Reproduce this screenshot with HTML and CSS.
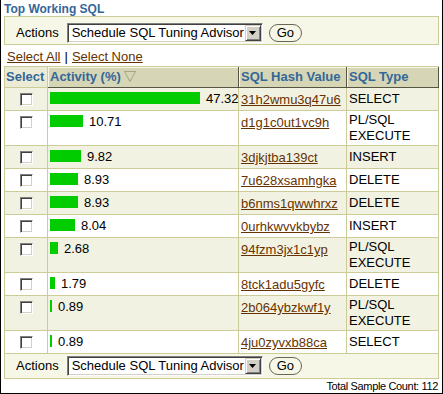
FILE: index.html
```html
<!DOCTYPE html>
<html lang="en">
<head>
    <meta charset="UTF-8">
    <meta name="viewport" content="width=device-width, initial-scale=1.0">
    <title>Top Working SQL</title>
    <link rel="stylesheet" href="styles.css">
</head>
<body>
    <div class="page">
        <h1 class="title">Top Working SQL</h1>

        <div class="actions top">
            <span class="actions-label">Actions</span>
            <span class="select">
                <span class="select-text">Schedule SQL Tuning Advisor</span>
                <span class="select-arrow"><svg width="7" height="4" viewBox="0 0 7 4"><polygon points="0,0 7,0 3.5,4" fill="#000"/></svg></span>
            </span>
            <button class="go-btn">Go</button>
        </div>

        <div class="select-links">
            <a href="#">Select All</a><span class="sep">|</span><a href="#">Select None</a>
        </div>

        <table class="sql-table">
            <thead>
                <tr>
                    <th class="col-select">Select</th>
                    <th class="col-activity sortable">Activity (%)<svg class="sort-icon" width="12" height="11" viewBox="0 0 12 11"><polygon points="0.5,0.5 11.5,0.5 6,10.5" fill="none" stroke="#a3a386"/></svg></th>
                    <th class="col-hash sortable">SQL Hash Value</th>
                    <th class="col-type sortable">SQL Type</th>
                </tr>
            </thead>
            <tbody id="sql-rows">
            </tbody>
        </table>

        <div class="actions bottom">
            <span class="actions-label">Actions</span>
            <span class="select">
                <span class="select-text">Schedule SQL Tuning Advisor</span>
                <span class="select-arrow"><svg width="7" height="4" viewBox="0 0 7 4"><polygon points="0,0 7,0 3.5,4" fill="#000"/></svg></span>
            </span>
            <button class="go-btn">Go</button>
        </div>

        <div class="total">Total Sample Count: 112</div>
    </div>

    <script>
        const rows = [
            { pct: 47.32, hash: '31h2wmu3q47u6', type: 'SELECT' },
            { pct: 10.71, hash: 'd1g1c0ut1vc9h', type: 'PL/SQL EXECUTE' },
            { pct: 9.82, hash: '3djkjtba139ct', type: 'INSERT' },
            { pct: 8.93, hash: '7u628xsamhgka', type: 'DELETE' },
            { pct: 8.93, hash: 'b6nms1qwwhrxz', type: 'DELETE' },
            { pct: 8.04, hash: '0urhkwvvkbybz', type: 'INSERT' },
            { pct: 2.68, hash: '94fzm3jx1c1yp', type: 'PL/SQL EXECUTE' },
            { pct: 1.79, hash: '8tck1adu5gyfc', type: 'DELETE' },
            { pct: 0.89, hash: '2b064ybzkwf1y', type: 'PL/SQL EXECUTE' },
            { pct: 0.89, hash: '4ju0zyvxb88ca', type: 'SELECT' }
        ];

        // widest bar is 150px
        const scale = 150 / 47.32;

        document.getElementById('sql-rows').innerHTML = rows.map(row => `
            <tr>
                <td class="check-cell"><input type="checkbox"></td>
                <td class="activity-cell">
                    <div class="activity">
                        <span class="bar" style="width: ${Math.max(1, Math.floor(row.pct * scale + 0.001))}px"></span>
                        <span>${row.pct.toFixed(2)}</span>
                    </div>
                </td>
                <td class="hash-cell"><a href="#">${row.hash}</a></td>
                <td class="type-cell">${row.type}</td>
            </tr>
        `).join('');
    </script>
</body>
</html>
```

FILE: styles.css
```css
body {
    margin: 0;
    font-family: "Liberation Sans", Arial, sans-serif;
    font-size: 13px;
    color: #000;
    background: #fff;
}

.page {
    width: 443px;
    height: 394px;
    box-sizing: border-box;
    border: 1px solid #000;
    border-top: 0;
    padding: 0 3px;
    overflow: hidden;
}

.title {
    margin: 0;
    padding-top: 2px;
    font-size: 12px;
    line-height: 14px;
    font-weight: bold;
    color: #336699;
    border-bottom: 1px solid #cccc99;
}

.actions {
    display: flex;
    align-items: center;
    background: #f7f7e7;
    border: 1px solid #cccc99;
    border-top: 0;
    padding: 6px 0 1px 11px;
}

.actions.bottom {
    padding: 2px 0 2px 11px;
}

.actions-label {
    margin-right: 8px;
    line-height: 16px;
}

.select {
    display: flex;
    align-items: center;
    width: 196px;
    height: 20px;
    box-sizing: border-box;
    border: 1px solid;
    border-color: #808080 #fff #fff #808080;
    box-shadow: inset 1px 1px 0 #404040, inset -1px -1px 0 #d4d0c8;
    background: #fff;
    padding: 1px 1px 1px 4px;
}

.select-text {
    flex: 1;
    line-height: 16px;
    white-space: nowrap;
    overflow: hidden;
}

.select-arrow {
    display: flex;
    align-items: center;
    justify-content: center;
    width: 16px;
    height: 16px;
    box-sizing: border-box;
    background: #d4d0c8;
    border: 1px solid;
    border-color: #d4d0c8 #404040 #404040 #d4d0c8;
    box-shadow: inset 1px 1px 0 #fff, inset -1px -1px 0 #808080;
}

.go-btn {
    margin-left: 6px;
    height: 18px;
    padding: 0 7px;
    font-family: inherit;
    font-size: 13px;
    line-height: 16px;
    color: #000;
    background: #f7f7e7;
    border: 1px solid #666655;
    border-radius: 9px;
    cursor: pointer;
}

.select-links {
    padding: 4px 0 1px 3px;
    line-height: 16px;
}

a {
    color: #663300;
    text-decoration: underline;
}

.sep {
    margin: 0 4px;
}

.sql-table {
    width: 435px;
    box-sizing: border-box;
    table-layout: fixed;
    border-collapse: separate;
    border-spacing: 0;
    border-left: 1px solid #cccc99;
    border-top: 1px solid #cccc99;
}

.sql-table th {
    box-sizing: border-box;
    padding: 2px;
    line-height: 16px;
    font-size: 13px;
    font-weight: bold;
    color: #336699;
    text-align: left;
    white-space: nowrap;
    background: #ebebd6;
    border-right: 1px solid #cccc99;
    border-bottom: 1px solid #cccc99;
}

.sql-table th.sortable {
    background: #d6d6b6;
    border-right-color: #555544;
    border-bottom-color: #555544;
    box-shadow: inset 1px 1px 0 #f7f7e7;
}

.sql-table th.col-select {
    width: 43px;
    padding-left: 1px;
}

.col-activity {
    width: 191px;
}

.col-hash {
    width: 108px;
}

.col-type {
    width: 92px;
}

.sort-icon {
    margin-left: 3px;
    vertical-align: -1px;
}

.sql-table td {
    padding: 0 2px;
    border-right: 1px solid #cccc99;
    border-bottom: 1px solid #cccc99;
}

.sql-table tbody tr:nth-child(odd) td {
    background: #f2f2e3;
}

.check-cell {
    vertical-align: top;
    padding-top: 5px !important;
}

.check-cell input {
    display: block;
    appearance: none;
    width: 13px;
    height: 13px;
    margin: 0 auto;
    border: 1px solid;
    border-color: #808080 #fff #fff #808080;
    box-shadow: inset 1px 1px 0 #404040, inset -1px -1px 0 #d4d0c8;
    background: #fff;
}

.activity-cell {
    vertical-align: top;
    padding: 4px 0 6px 2px !important;
}

.activity {
    display: flex;
    align-items: center;
    gap: 6px;
    height: 12px;
    white-space: nowrap;
}

.bar {
    flex-shrink: 0;
    height: 12px;
    background: #00cc00;
}

.hash-cell {
    vertical-align: top;
    padding: 4px 2px 2px !important;
    line-height: 16px;
}

.type-cell {
    vertical-align: middle;
    padding: 1px 2px !important;
    line-height: 16px;
}

.total {
    text-align: right;
    padding-right: 1px;
    font-size: 11px;
    letter-spacing: -0.35px;
    line-height: 14px;
}
```
